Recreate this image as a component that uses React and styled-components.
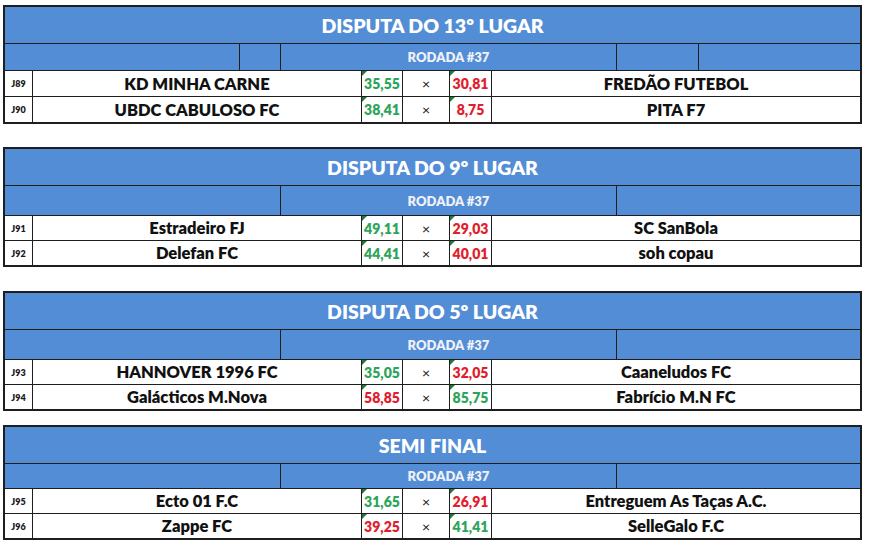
import styled, { createGlobalStyle } from "styled-components";

const BLUE = "#538dd5";
const LINE = "#1e1e1e";

const GlobalStyle = createGlobalStyle`
    html, body {
        margin: 0;
        padding: 0;
        background: #ffffff;
    }
    body {
        font-family: Lato, "Open Sans", Arial, sans-serif;
    }
`;

const sections = [
    {
        title: "DISPUTA DO 13º LUGAR",
        subCols: "235px 41px 336px 82px 1fr",
        subCells: 5,
        subHeight: 26,
        rowHeight: 25,
        gap: 5,
        games: [
            { id: "J89", home: "KD MINHA CARNE", hs: "35,55", away: "FREDÃO FUTEBOL", as: "30,81" },
            { id: "J90", home: "UBDC CABULOSO FC", hs: "38,41", away: "PITA F7", as: "8,75" },
        ],
    },
    {
        title: "DISPUTA DO 9º LUGAR",
        subCols: "276px 336px 1fr",
        subCells: 3,
        subHeight: 29,
        rowHeight: 24,
        gap: 23,
        games: [
            { id: "J91", home: "Estradeiro FJ", hs: "49,11", away: "SC SanBola", as: "29,03" },
            { id: "J92", home: "Delefan FC", hs: "44,41", away: "soh copau", as: "40,01" },
        ],
    },
    {
        title: "DISPUTA DO 5º LUGAR",
        subCols: "276px 336px 1fr",
        subCells: 3,
        subHeight: 29,
        rowHeight: 24,
        gap: 24,
        games: [
            { id: "J93", home: "HANNOVER 1996 FC", hs: "35,05", away: "Caaneludos FC", as: "32,05" },
            { id: "J94", home: "Galácticos M.Nova", hs: "58,85", away: "Fabrício M.N FC", as: "85,75" },
        ],
    },
    {
        title: "SEMI FINAL",
        subCols: "276px 336px 1fr",
        subCells: 3,
        subHeight: 24,
        rowHeight: 24,
        gap: 14,
        games: [
            { id: "J95", home: "Ecto 01 F.C", hs: "31,65", away: "Entreguem As Taças A.C.", as: "26,91" },
            { id: "J96", home: "Zappe FC", hs: "39,25", away: "SelleGalo F.C", as: "41,41" },
        ],
    },
];

function toNumber(v) {
    return parseFloat(v.replace(",", "."));
}

export default function App() {
    return (
        <Page>
            <GlobalStyle />
            {sections.map((s) => (
                <Table key={s.title} gap={s.gap}>
                    <TitleRow>{s.title}</TitleRow>
                    <SubRow cols={s.subCols} h={s.subHeight}>
                        {Array.from({ length: s.subCells }).map((_, i) => (
                            <SubCell key={i}>
                                {i === Math.floor(s.subCells / 2) ? "RODADA #37" : ""}
                            </SubCell>
                        ))}
                    </SubRow>
                    {s.games.map((g) => {
                        const homeWins = toNumber(g.hs) > toNumber(g.as);
                        return (
                            <MatchRow key={g.id} h={s.rowHeight}>
                                <GameId>{g.id}</GameId>
                                <Team>{g.home}</Team>
                                <Score win={homeWins}>{g.hs}</Score>
                                <Versus>×</Versus>
                                <Score win={!homeWins}>{g.as}</Score>
                                <Team>{g.away}</Team>
                            </MatchRow>
                        );
                    })}
                </Table>
            ))}
        </Page>
    );
}

const Page = styled.div`
    width: 859px;
    padding-left: 3px;
    padding-bottom: 4px;
`;

const Table = styled.div`
    margin-top: ${(props) => props.gap}px;
    border: 2px solid ${LINE};
    display: flex;
    flex-direction: column;
`;

const TitleRow = styled.div`
    height: 36px;
    border-bottom: 1px solid ${LINE};
    background: ${BLUE};
    color: #ffffff;
    font-weight: 800;
    font-size: 19.5px;
    display: flex;
    align-items: center;
    justify-content: center;
    box-sizing: content-box;
`;

const SubRow = styled.div`
    height: ${(props) => props.h}px;
    display: grid;
    grid-template-columns: ${(props) => props.cols};
    background: ${BLUE};
    border-bottom: 1px solid ${LINE};
`;

const SubCell = styled.div`
    border-right: 1px solid ${LINE};
    display: flex;
    align-items: center;
    justify-content: center;
    color: #eef2f8;
    font-weight: 800;
    font-size: 13px;
    &:last-child {
        border-right: none;
    }
`;

const MatchRow = styled.div`
    height: ${(props) => props.h}px;
    display: grid;
    grid-template-columns: 28px 329px 41px 47px 42px 1fr;
    background: #ffffff;
    & + & {
        border-top: 1px solid ${LINE};
    }
`;

const Cell = styled.div`
    border-right: 1px solid ${LINE};
    display: flex;
    align-items: center;
    justify-content: center;
    box-sizing: border-box;
    &:last-child {
        border-right: none;
    }
`;

const GameId = styled(Cell)`
    font-size: 9px;
    font-weight: 800;
    color: #1a1a1a;
`;

const Team = styled(Cell)`
    font-size: 16.5px;
    font-weight: 800;
    color: #111;
`;

const Score = styled(Cell)`
    position: relative;
    font-size: 14px;
    font-weight: 800;
    color: ${(props) => (props.win ? "#2ca55a" : "#e0202c")};
    &::before {
        content: "";
        position: absolute;
        left: 0;
        top: 0;
        border-top: 5px solid #1f7a35;
        border-right: 5px solid transparent;
    }
`;

const Versus = styled(Cell)`
    font-size: 14px;
    color: #111;
`;
